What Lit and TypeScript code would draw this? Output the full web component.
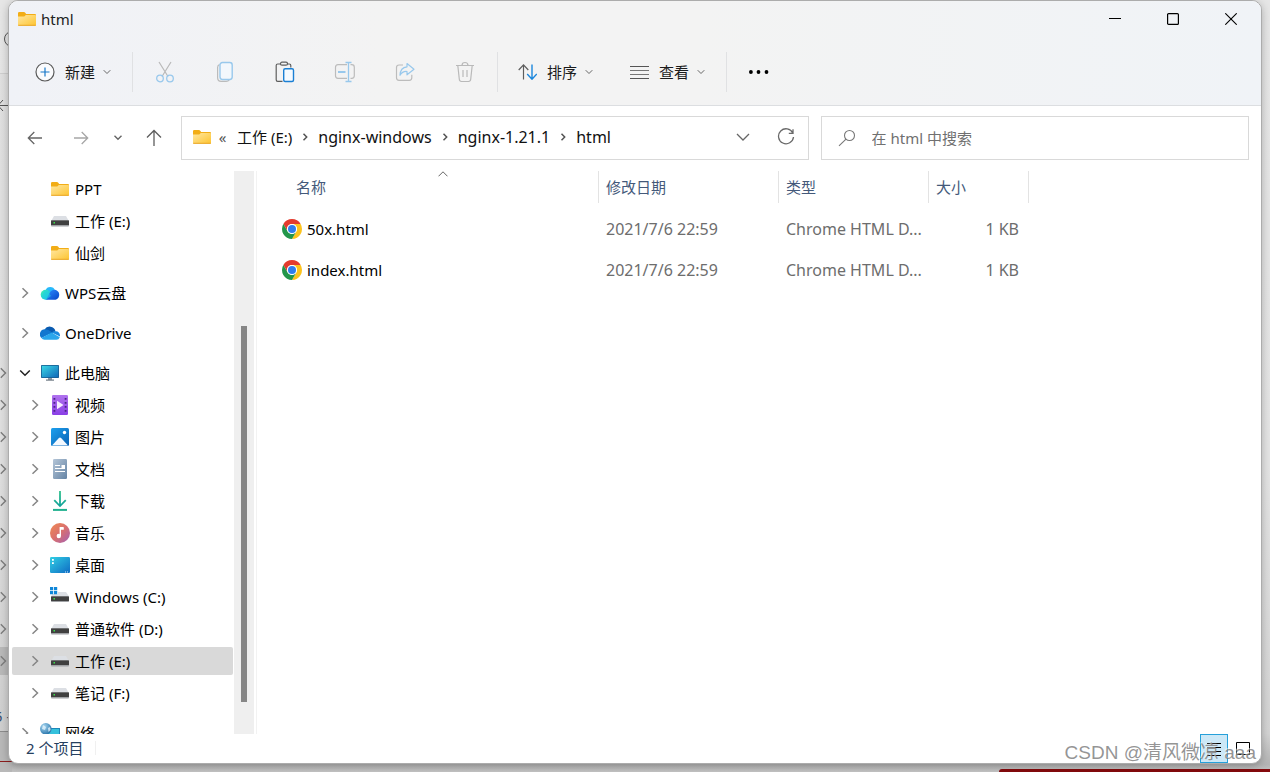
import { LitElement, html, css, nothing } from "lit";
import { customElement, state } from "lit/decorators.js";
import { classMap } from "lit/directives/class-map.js";

const folder = html`<svg class="ic" width="20" height="20" viewBox="0 0 20 20" aria-hidden="true">
  <defs><linearGradient id="fg" x1="0" y1="0" x2="1" y2="1"><stop offset="0" stop-color="#ffe7a2"/><stop offset="1" stop-color="#fdc42f"/></linearGradient></defs>
  <path d="M1 4.2Q1 3 2.2 3H7q.6 0 1 .5L9.200 5H18q1 0 1 1v3H1z" fill="#f2ad16"/>
  <path d="M1 7.500H6.600q.7 0 1.200-.5L8.800 6H18.200q.8 0 .8.800V16q0 .8-.8.800H1.800Q1 16.800 1 16z" fill="url(#fg)"/>
  <path d="M1.200 16.300H18.800" stroke="#e9a72a"/>
</svg>`;

const drive = html`<svg class="ic" width="20" height="20" viewBox="0 0 20 20" aria-hidden="true">
  <path d="M4 5h12l2.800 5H1.200z" fill="#dcdfe4"/><rect x="1" y="9" width="18" height="6.500" rx=".8" fill="#a0a2a5"/>
  <rect x="1" y="9.500" width="18" height="4.500" rx=".5" fill="#404040"/><rect x="3.500" y="11" width="1.500" height="1.500" fill="#3be04a"/></svg>`;
const driveC = html`<svg class="ic" width="20" height="20" viewBox="0 0 20 20" aria-hidden="true">
  <path d="M4 5h12l2.800 4H1.200z" fill="#dcdfe4"/><rect x="1" y="9" width="18" height="6" rx=".8" fill="#a0a2a5"/>
  <rect x="1" y="9.500" width="18" height="4.500" rx=".5" fill="#404040"/><rect x="3.500" y="11" width="1.500" height="1.500" fill="#3be04a"/>
  <path d="M0 0h8v7H0z" fill="#fff"/><path d="M0 0h3.200v3.200H0zM4 0h3.200v3.200H4zM0 4h3.200v3.200H0zM4 4h3.200v3.200H4z" fill="#1086d8"/></svg>`;
const wps = html`<svg class="ic" width="20" height="20" viewBox="0 0 20 20" aria-hidden="true">
  <defs><linearGradient id="w1" x1="0" y1="0" x2="1" y2="1"><stop offset="0" stop-color="#3ff0b0"/><stop offset="1" stop-color="#12b5f4"/></linearGradient>
  <linearGradient id="w2" x1="0" y1="0" x2="1" y2="1"><stop offset="0" stop-color="#2f8dff"/><stop offset="1" stop-color="#0644c8"/></linearGradient></defs>
  <path d="M5.500 7.500a5 5 0 0 1 9.500 0L10 13z" fill="#28b9fb"/>
  <circle cx="5.700" cy="11.800" r="5" fill="url(#w1)"/>
  <path d="M6 16.800h8.300a5 5 0 1 0-4-8.100z" fill="url(#w2)"/>
  <path d="M5 7q3 1 6 6l-5 3.800q-3-1-4.500-3z" fill="#21cfe2" opacity=".55"/></svg>`;
const oneDrive = html`<svg class="ic" width="20" height="20" viewBox="0 0 20 20" aria-hidden="true">
  <path d="M4.500 6.500a6 6 0 0 1 11 1.700l-5 4z" fill="#0a5bb0"/>
  <path d="M5 6.300a5 5 0 0 0-3.500 8.700L12 9.800Q9 6.300 5 6.300z" fill="#1277cf"/>
  <path d="M11.800 9.600 20 13.500Q20.300 8.500 15.700 8.200q-2.400-.2-3.900 1.400z" fill="#1a8ae0"/>
  <path d="M1.400 15 11.700 9.500l8.100 4.800q-1 2.500-3.400 2.500H4.500q-2 0-3.100-1.800z" fill="#2aa6ec"/></svg>`;
const pc = html`<svg class="ic" width="20" height="20" viewBox="0 0 20 20" aria-hidden="true">
  <defs><linearGradient id="pg" x1="0" y1="0" x2="1" y2="1"><stop offset="0" stop-color="#3ad7e6"/><stop offset="1" stop-color="#1168b8"/></linearGradient></defs>
  <path d="M8 14h4v3H8z" fill="#8e9aa5"/><path d="M6 16.500h8v1.200H6z" fill="#6f7a84"/>
  <rect x="1" y="2" width="18" height="13" rx=".8" fill="#185d91"/><rect x="1.800" y="2.800" width="16.400" height="11.400" fill="url(#pg)"/></svg>`;
const video = html`<svg class="ic" width="20" height="20" viewBox="0 0 20 20" aria-hidden="true">
  <defs><linearGradient id="vg" x1="0" y1="0" x2="0" y2="1"><stop offset="0" stop-color="#b072ee"/><stop offset="1" stop-color="#8a3fe6"/></linearGradient></defs>
  <rect x="2" y="0" width="16" height="20" rx="1.200" fill="url(#vg)"/>
  <path d="M3.500 3h1.800v1.800H3.500zM3.500 7h1.800v1.800H3.500zM3.500 11h1.800v1.800H3.500zM3.500 15h1.800v1.800H3.500zM14.700 3h1.800v1.800h-1.800zM14.700 7h1.800v1.800h-1.800zM14.700 11h1.800v1.800h-1.800zM14.700 15h1.800v1.800h-1.800z" fill="#4b2388"/>
  <path d="M7 5.700v8.600l6.500-4.300z" fill="#f5ecff"/></svg>`;
const picture = html`<svg class="ic" width="20" height="20" viewBox="0 0 20 20" aria-hidden="true">
  <defs><linearGradient id="ig" x1="0" y1="0" x2="1" y2="1"><stop offset="0" stop-color="#1ca0ee"/><stop offset="1" stop-color="#0a61b4"/></linearGradient></defs>
  <rect x="1" y="1" width="18" height="18" rx="1.500" fill="url(#ig)"/><circle cx="14.500" cy="5.500" r="1.700" fill="#fff"/>
  <path d="M2 18.500 8.900 11q1.100-1.100 2.200 0L18 18.500z" fill="#f4f9ff"/></svg>`;
const doc = html`<svg class="ic" width="20" height="20" viewBox="0 0 20 20" aria-hidden="true">
  <defs><linearGradient id="og" x1="0" y1="0" x2="1" y2="1"><stop offset="0" stop-color="#b5c6d8"/><stop offset="1" stop-color="#6483a4"/></linearGradient></defs>
  <rect x="3" y="0" width="14" height="20" rx="1.200" fill="url(#og)"/>
  <path d="M5 6.500h5M5 9.500h10M5 12.500h10" stroke="#fff" stroke-width="1.200"/><path d="M11.500 6H15v3.600h-3.500z" fill="#fff"/></svg>`;
const download = html`<svg class="ic" width="20" height="20" viewBox="0 0 20 20" aria-hidden="true" fill="none">
  <defs><linearGradient id="lg" x1="0" y1="0" x2="0" y2="1"><stop offset="0" stop-color="#32c28c"/><stop offset="1" stop-color="#0e9f9a"/></linearGradient></defs>
  <path d="M9.100 0h1.800v13l4.200-4.500 1.300 1.300L10 16.200 3.600 9.800l1.300-1.300 4.200 4.500z" fill="url(#lg)"/><path d="M3 18.900h14" stroke="#1fb08e" stroke-width="2"/></svg>`;
const music = html`<svg class="ic" width="20" height="20" viewBox="0 0 20 20" aria-hidden="true">
  <defs><linearGradient id="mg" x1="0" y1="0" x2="1" y2="1"><stop offset="0" stop-color="#f08a52"/><stop offset=".5" stop-color="#d9706f"/><stop offset="1" stop-color="#a35fb4"/></linearGradient></defs>
  <circle cx="10" cy="10" r="10" fill="url(#mg)"/><circle cx="8.800" cy="13" r="2.200" fill="#fff"/>
  <path d="M9.600 4h3.600q.6 0 .6.600v1.600q0 .6-.6.600h-2.200V13H9.600z" fill="#fff"/></svg>`;
const desktop = html`<svg class="ic" width="20" height="20" viewBox="0 0 20 20" aria-hidden="true">
  <defs><linearGradient id="kg" x1="0" y1="0" x2="1" y2="1"><stop offset="0" stop-color="#31cfe4"/><stop offset="1" stop-color="#0f6cc4"/></linearGradient></defs>
  <rect x="0" y="2" width="20" height="16" rx="1.200" fill="url(#kg)"/>
  <path d="M2 4h1.800v1.800H2zM2 7.200h1.800V9H2z" fill="#fff"/><path d="M15 17h1M17 17h1" stroke="#cfe8fb"/></svg>`;
const network = html`<svg class="ic" width="20" height="20" viewBox="0 0 20 20" aria-hidden="true">
  <defs><radialGradient id="ng" cx=".35" cy=".3" r=".7"><stop offset="0" stop-color="#a8d8f2"/><stop offset="1" stop-color="#2d78ad"/></radialGradient></defs>
  <rect x="5" y="5" width="15" height="12" fill="#1d86b8"/><rect x="6" y="6" width="13" height="10" fill="#35c1dc"/>
  <circle cx="5.800" cy="5.800" r="5.800" fill="url(#ng)"/><path d="M3 2l3 2-1 3-3-1zM8 5l2-1 .5 3-2 2z" fill="#e2f3fb" opacity=".8"/></svg>`;
const chrome = html`<svg class="ic" width="20" height="20" viewBox="0 0 20 20" aria-hidden="true">
  <circle cx="10" cy="10" r="10" fill="#fff"/>
  <path d="M1.340 5 5.670 12.500A5 5 0 0 1 10 5H18.660A10 10 0 0 0 1.340 5z" fill="#e33b2e"/>
  <path d="M18.660 5A10 10 0 0 1 10 20L14.330 12.500A5 5 0 0 0 10 5z" fill="#fcc31e"/>
  <path d="M10 20A10 10 0 0 1 1.340 5L5.670 12.500A5 5 0 0 0 14.330 12.500z" fill="#23964a"/>
  <circle cx="10" cy="10" r="5" fill="#fff"/><circle cx="10" cy="10" r="4" fill="#2f7ded"/></svg>`;

const chevDown = html`<svg class="ic" width="8" height="8" viewBox="0 0 8 8" fill="none" stroke="#666" aria-hidden="true"><path d="M.7 2.200 4 5.500 7.300 2.200"/></svg>`;
const crumbArrow = html`<svg class="crumb-arrow" width="26" height="10" viewBox="0 0 26 10" fill="none" stroke="#555" stroke-width="1.500" aria-hidden="true"><path d="M11.500 1.800 14.700 5 11.500 8.200"/></svg>`;

interface Place {
  name: string;
  icon: unknown;
  level: number;
  twisty?: "open" | "closed";
  group?: boolean;
}

const places: Place[] = [
  { name: "PPT", icon: folder, level: 1 },
  { name: "工作 (E:)", icon: drive, level: 1 },
  { name: "仙剑", icon: folder, level: 1 },
  { name: "WPS云盘", icon: wps, level: 0, twisty: "closed", group: true },
  { name: "OneDrive", icon: oneDrive, level: 0, twisty: "closed", group: true },
  { name: "此电脑", icon: pc, level: 0, twisty: "open", group: true },
  { name: "视频", icon: video, level: 1, twisty: "closed" },
  { name: "图片", icon: picture, level: 1, twisty: "closed" },
  { name: "文档", icon: doc, level: 1, twisty: "closed" },
  { name: "下载", icon: download, level: 1, twisty: "closed" },
  { name: "音乐", icon: music, level: 1, twisty: "closed" },
  { name: "桌面", icon: desktop, level: 1, twisty: "closed" },
  { name: "Windows (C:)", icon: driveC, level: 1, twisty: "closed" },
  { name: "普通软件 (D:)", icon: drive, level: 1, twisty: "closed" },
  { name: "工作 (E:)", icon: drive, level: 1, twisty: "closed" },
  { name: "笔记 (F:)", icon: drive, level: 1, twisty: "closed" },
  { name: "网络", icon: network, level: 0, twisty: "closed", group: true },
];

const files = [
  { name: "50x.html", date: "2021/7/6 22:59", type: "Chrome HTML D...", size: "1 KB" },
  { name: "index.html", date: "2021/7/6 22:59", type: "Chrome HTML D...", size: "1 KB" },
];

const reset = css`
  * { box-sizing: border-box; }
  button { font: inherit; color: inherit; background: none; border: 0; padding: 0; margin: 0; display: flex; align-items: center; justify-content: center; }
  a { color: inherit; text-decoration: none; }
  .ic { display: block; flex: none; }
`;

@customElement("explorer-toolbar")
export class ExplorerToolbar extends LitElement {
  static styles = [reset, css`
    :host { display: block; background: linear-gradient(90deg, #f0f2f7, #f3f3f3 30%, #f3f3f3 55%, #f0f3f7); border-bottom: 1px solid #dcdee1; }
    .title { display: flex; height: 36px; align-items: center; padding: 0 1px 0 8px; }
    .name { flex: 1; padding-left: 4px; color: #222; }
    .win { width: 58px; height: 36px; }
    .bar { display: flex; height: 68px; align-items: center; padding: 2px 0 0 9px; }
    .menu { width: 112px; height: 40px; gap: 8px; justify-content: flex-start; padding-left: 17px; color: #1b1b1b; }
    .text { padding-left: 2px; }
    .tool { width: 60px; height: 40px; }
    .sep { width: 1px; height: 40px; margin: 0 2px; background: #e0e1e3; }
  `];

  render() {
    return html`
      <div class="title">
        ${folder}<span class="name">html</span>
        <button class="win" aria-label="最小化"><svg width="12" height="12" viewBox="0 0 12 12"><path d="M0 5.500h12" stroke="#000"/></svg></button>
        <button class="win" aria-label="最大化"><svg width="12" height="12" viewBox="0 0 12 12"><rect x=".6" y=".6" width="10.800" height="10.800" rx="1" fill="none" stroke="#000" stroke-width="1.200"/></svg></button>
        <button class="win" aria-label="关闭"><svg width="12" height="12" viewBox="0 0 12 12"><path d="M.3.300l11.400 11.400M11.700.300.300 11.700" stroke="#000" stroke-width="1.100"/></svg></button>
      </div>
      <div class="bar">
        <button class="menu"><svg class="ic" width="20" height="20" viewBox="0 0 20 20" fill="none"><circle cx="10" cy="10" r="9" fill="#fafbfd" stroke="#5a5a5a" stroke-width="1.200"/><path d="M10 5.500v9M5.500 10h9" stroke="#1677c8" stroke-width="1.200"/></svg><span class="text">新建</span>${chevDown}</button>
        <span class="sep"></span>
        <button class="tool" aria-label="剪切"><svg width="20" height="22" viewBox="0 0 20 22" fill="none"><path d="M4 1l9 14.500M16 1 7 15.500" stroke="#b9b9b9" stroke-width="1.200"/><circle cx="5" cy="17.500" r="3.300" stroke="#98c8ec" stroke-width="1.300"/><circle cx="15" cy="17.500" r="3.300" stroke="#98c8ec" stroke-width="1.300"/></svg></button>
        <button class="tool" aria-label="复制"><svg width="20" height="22" viewBox="0 0 20 22" fill="none"><path d="M4.500 3.500Q2.600 4.200 2.600 6.500v10.300q0 3.600 3.600 3.600h5q2 0 3-1.500" stroke="#bbb" stroke-width="1.200"/><rect x="5" y="1.500" width="12.200" height="17" rx="2.400" stroke="#98c8ec" stroke-width="1.400" fill="#f2f7fc"/></svg></button>
        <button class="tool" aria-label="粘贴"><svg width="20" height="22" viewBox="0 0 20 22" fill="none"><path d="M6 3H2.700Q1.200 3 1.200 4.500v14.300q0 1.600 1.500 1.600h4.800M12.500 3h1.800q1.500 0 1.500 1.500v2" stroke="#5d5d5d" stroke-width="1.200"/><rect x="5.500" y="1.200" width="7" height="3" rx="1.500" stroke="#5d5d5d" stroke-width="1.200"/><rect x="8.700" y="7.700" width="9.800" height="12.800" rx="1.500" fill="#f5faff" stroke="#1a7fd4" stroke-width="1.400"/></svg></button>
        <button class="tool" aria-label="重命名"><svg width="22" height="22" viewBox="0 0 22 22" fill="none"><path d="M13 3.700H4Q1.500 3.700 1.500 6.200v8.600q0 2.500 2.500 2.500h9M16.500 3.700h1.300q2.500 0 2.500 2.500v8.600q0 2.500-2.500 2.500h-1.300" stroke="#bcbcbc" stroke-width="1.200"/><path d="M4 11h7.500" stroke="#98c8ec" stroke-width="2"/><path d="M11.500 1.500h6M11.500 20.500h6M14.500 1.500v19" stroke="#98c8ec" stroke-width="1.300"/></svg></button>
        <button class="tool" aria-label="共享"><svg width="20" height="22" viewBox="0 0 20 22" fill="none"><path d="M8 4H4Q1.500 4 1.500 6.500v10.300q0 2.500 2.500 2.500h10.300q2.500 0 2.500-2.500v-3" stroke="#bcbcbc" stroke-width="1.200"/><path d="M12 2.500 19 8.200 12 13.800v-3.300q-4.500-.5-7 3.800.3-8 7-8.500z" stroke="#98c8ec" stroke-width="1.200" stroke-linejoin="round"/></svg></button>
        <button class="tool" aria-label="删除"><svg width="20" height="22" viewBox="0 0 20 22" fill="none" stroke="#b9b9b9" stroke-width="1.200"><path d="M1 4.500h18M7 4.500q0-3 3-3t3 3M2.800 4.500l1.500 13.800q.2 2.200 2.200 2.200h7q2 0 2.200-2.200l1.500-13.800M8 9v7M12 9v7"/></svg></button>
        <span class="sep"></span>
        <button class="menu"><svg class="ic" width="20" height="20" viewBox="0 0 20 20" fill="none"><path d="M6.500 17.500V2.500M1.700 8 6.500 2.800 11.300 8" stroke="#5d5d5d" stroke-width="1.200"/><path d="M15 2.500v15M10.200 12l4.800 5.200 4.800-5.200" stroke="#1a86dc" stroke-width="1.400"/></svg><span class="text">排序</span>${chevDown}</button>
        <button class="menu"><svg class="ic" width="20" height="20" viewBox="0 0 20 20" fill="none"><path d="M1 4.500h19M1 16.500h19" stroke="#555"/><path d="M1 8.500h19M1 12.500h19" stroke="#777"/></svg><span class="text">查看</span>${chevDown}</button>
        <span class="sep"></span>
        <button class="tool" aria-label="更多"><svg width="20" height="6" viewBox="0 0 20 6"><circle cx="1.900" cy="3" r="1.900"/><circle cx="9.500" cy="3" r="1.900"/><circle cx="17.500" cy="3" r="1.900"/></svg></button>
      </div>`;
  }
}

@customElement("explorer-address")
export class ExplorerAddress extends LitElement {
  static styles = [reset, css`
    :host { display: flex; align-items: center; padding: 10px 12px 11px 3px; }
    .steps { display: grid; grid-template-columns: 46px 46px 28px 44px; margin-right: 5px; }
    .step { height: 40px; }
    .path { flex: 3 1 0; min-width: 0; display: flex; align-items: center; height: 44px; border: 1px solid #d9d9d9; padding: 0 0 2px 10px; white-space: nowrap; color: #111; }
    .dots { width: 25px; padding-right: 4px; text-align: center; color: #555; }
    .latin { font-size: 16px; }
    .crumb-arrow { flex: none; }
    .push { margin-left: auto; }
    .end { width: 43px; height: 40px; }
    .search { flex: 2 1 0; min-width: 0; height: 44px; margin-left: 12px; display: flex; align-items: center; gap: 16px; padding-left: 16px; border: 1px solid #d9d9d9; }
    .field { flex: 1; min-width: 0; border: 0; outline: 0; padding: 0; background: none; font: inherit; color: #333; }
    .field::placeholder { color: #707070; opacity: 1; }
  `];

  render() {
    return html`
      <div class="steps">
        <button class="step" aria-label="后退"><svg width="16" height="16" viewBox="0 0 16 16" fill="none" stroke="#666" stroke-width="1.300"><path d="M15 8H1.500M7.300 2 1.300 8l6 6"/></svg></button>
        <button class="step" aria-label="前进"><svg width="16" height="16" viewBox="0 0 16 16" fill="none" stroke="#a6a6a6" stroke-width="1.300"><path d="M1 8h13.500M8.700 2l6 6-6 6"/></svg></button>
        <button class="step" aria-label="最近浏览的位置"><svg width="8" height="8" viewBox="0 0 8 8" fill="none" stroke="#666" stroke-width="1.400"><path d="M.5 1.800 4 5.300 7.500 1.800"/></svg></button>
        <button class="step" aria-label="上移"><svg width="16" height="18" viewBox="0 0 16 18" fill="none" stroke="#5d5d5d" stroke-width="1.300"><path d="M8 17V1.700M1 8.500l7-7 7 7"/></svg></button>
      </div>
      <nav class="path" aria-label="地址">
        ${folder}<span class="dots">«</span>
        <a href="#e">工作 (E:)</a>${crumbArrow}
        <a class="latin" href="#nginx-windows">nginx-windows</a>${crumbArrow}
        <a class="latin" href="#nginx">nginx-1.21.1</a>${crumbArrow}
        <a class="latin" href="#html">html</a>
        <button class="end push" aria-label="以前的位置"><svg width="14" height="8" viewBox="0 0 14 8" fill="none" stroke="#666" stroke-width="1.300"><path d="M1 1l6 6 6-6"/></svg></button>
        <button class="end" aria-label="刷新"><svg width="18" height="18" viewBox="0 0 18 18" fill="none" stroke="#6a6a6a" stroke-width="1.300"><path d="M15.800 5A7.500 7.500 0 1 0 16.500 9M16 1.200V5.300H11.800"/></svg></button>
      </nav>
      <label class="search">
        <svg class="ic" width="18" height="18" viewBox="0 0 18 18" fill="none" stroke="#777" stroke-width="1.100"><circle cx="11.500" cy="6.500" r="5"/><path d="M8 10.200 1 16.800"/></svg>
        <input class="field" type="search" aria-label="搜索" placeholder="在 html 中搜索" />
      </label>`;
  }
}

@customElement("explorer-tree")
export class ExplorerTree extends LitElement {
  @state() private current = 14;

  static styles = [reset, css`
    :host { display: grid; grid-template-columns: 1fr 20px; min-height: 0; overflow: hidden; }
    .list { margin: 0; padding: 2px 1px 0 3px; list-style: none; min-height: 0; overflow: hidden; }
    .item { padding: 2px 0; }
    .group { margin-top: 8px; }
    .row { display: flex; align-items: center; gap: 5px; height: 28px; padding-left: 3px; border-radius: 2px; color: #000; white-space: nowrap; }
    .deep { padding-left: 13px; }
    .on { background: #d9d9d9; }
    .twisty { width: 20px; display: flex; justify-content: center; flex: none; }
    .track { display: grid; grid-template-rows: 155fr 376fr 32fr; justify-items: center; background: #efefef; }
    .thumb { grid-row: 2; width: 6px; background: #868686; }
  `];

  render() {
    return html`
      <ul class="list">
        ${places.map((p, i) => html`
          <li class=${classMap({ item: true, group: !!p.group })}>
            <a href="#place" class=${classMap({ row: true, deep: p.level === 1, on: i === this.current })}
              @click=${(e: Event) => { e.preventDefault(); this.current = i; }}>
              <span class="twisty">${p.twisty === "closed"
                ? html`<svg width="8" height="12" viewBox="0 0 8 12" fill="none" stroke="#858585" stroke-width="1.500"><path d="M1.500 1.200 6.500 6 1.500 10.800"/></svg>`
                : p.twisty === "open"
                ? html`<svg width="12" height="8" viewBox="0 0 12 8" fill="none" stroke="#222" stroke-width="1.500"><path d="M1.200 1.500 6 6.300 10.800 1.500"/></svg>`
                : nothing}</span>
              ${p.icon}<span>${p.name}</span>
            </a>
          </li>`)}
      </ul>
      <div class="track"><div class="thumb"></div></div>`;
  }
}

@customElement("explorer-files")
export class ExplorerFiles extends LitElement {
  static styles = [reset, css`
    :host { display: block; min-width: 0; min-height: 0; overflow: hidden; margin-left: 2px; border-left: 1px solid #f2f2f2; }
    .table { width: 772px; max-width: 100%; table-layout: fixed; border-collapse: separate; border-spacing: 0; }
    .c1 { width: 342px; } .c2 { width: 180px; } .c3 { width: 150px; } .c4 { width: 100px; }
    .head { height: 32px; padding: 0 0 0 7px; border-right: 1px solid #e3e3e3; text-align: left; font-weight: 400; color: #44597a; }
    .first { padding-left: 39px; }
    .label { display: grid; grid-template-columns: 142px 1fr; height: 32px; align-items: center; }
    .sort { display: block; align-self: start; }
    .gap { height: 5px; padding: 0; }
    .cell { height: 41px; padding: 0 0 0 7px; color: #6d6d6d; font-size: 16px; white-space: nowrap; overflow: hidden; }
    .main { padding-left: 25px; font-size: 15px; }
    .file { display: flex; align-items: center; gap: 5px; color: #000; }
    .num { text-align: right; padding-right: 10px; }
  `];

  render() {
    return html`
      <table class="table">
        <colgroup><col class="c1" /><col class="c2" /><col class="c3" /><col class="c4" /></colgroup>
        <thead>
          <tr>
            <th class="head first"><span class="label">名称
              <svg class="sort" width="10" height="6" viewBox="0 0 10 6" fill="none" stroke="#666"><path d="M.5 5.300 5 .8 9.500 5.300"/></svg></span></th>
            <th class="head">修改日期</th><th class="head">类型</th><th class="head">大小</th>
          </tr>
        </thead>
        <tbody>
          <tr><td class="gap" colspan="4"></td></tr>
          ${files.map((f) => html`<tr>
            <td class="cell main"><a class="file" href="#file">${chrome}<span>${f.name}</span></a></td>
            <td class="cell">${f.date}</td><td class="cell">${f.type}</td><td class="cell num">${f.size}</td>
          </tr>`)}
        </tbody>
      </table>`;
  }
}

@customElement("app-root")
export class AppRoot extends LitElement {
  static styles = [reset, css`
    :host { display: block; position: relative; height: 100vh; padding: 0 8px 8px; overflow: hidden; box-sizing: border-box;
      background: linear-gradient(180deg, #e6e6e6, #e4e4e4 60%, #d4d4d4 95%, #b4b4b4 99%, #c4c4c4);
      font-family: "Noto Sans", "Noto Sans CJK SC", sans-serif; font-size: 15px; line-height: 20px; }
    .behind { position: absolute; left: 0; top: 0; }
    .other { position: absolute; left: -6px; top: 706px; color: #3b5270; }
    .taskbar { position: absolute; right: 0; bottom: 0; width: 271px; height: 3px; background: #850a0d; border-top-left-radius: 3px; }
    .window { position: relative; height: 100%; display: grid; grid-template-rows: auto auto 1fr 29px; border: 1px solid #acacac; border-radius: 10px; background: #fff; overflow: hidden; box-shadow: 0 2px 8px rgba(0, 0, 0, 0.25); }
    .body { display: grid; grid-template-columns: 245px 1fr; min-height: 0; }
    .status { display: flex; align-items: stretch; padding: 0 4px 0 17px; color: #26405f; }
    .count { flex: 1; display: flex; align-items: center; padding-bottom: 2px; }
    .tick { width: 1px; height: 14px; margin-left: 12px; background: #f0f0f0; }
    .view { width: 28px; }
    .second { margin-left: 1px; }
    .active { background: #cce8f7; border: 1px solid #26a0da; }
    .mark { position: absolute; right: 14px; bottom: 7px; font-family: "Liberation Sans", "Noto Sans CJK SC", sans-serif; font-size: 19px; line-height: 24px; color: rgba(130, 130, 130, 0.85); text-shadow: -1px -1px 0 rgba(255, 255, 255, 0.5); pointer-events: none; white-space: nowrap; }
  `];

  render() {
    const rows = [373, 405, 437, 469, 501, 533, 565, 597, 629, 661];
    return html`
      <svg class="behind" width="12" height="772" viewBox="0 0 12 772" fill="none" aria-hidden="true">
        <path d="M0 73.500h12" stroke="#cfcfcf"/><path d="M0 74h12v657H0z" fill="#000" opacity=".02"/>
        <circle cx="12" cy="39" r="7.500" stroke="#555"/><path d="M3 100-2 105.500 3 111M0 105.500h9" stroke="#555"/>
        <path d="M0 647h12v28H0z" fill="#b9b9b9"/>
        ${rows.map((y) => html`<svg y=${y - 6} width="12" height="12" viewBox="0 0 12 12"><path d="M.8 1.200 5.500 6 .8 10.800" stroke="#7e7e7e" stroke-width="1.400" fill="none"/></svg>`)}
        <path d="M0 731.500h12" stroke="#8d8d8d"/><path d="M0 732h12v40H0z" fill="#b9b9b9"/><path d="M0 761.500h12" stroke="#8c1d1d"/>
      </svg>
      <span class="other" aria-hidden="true">5 -</span>
      <div class="taskbar"></div>
      <main class="window">
        <explorer-toolbar></explorer-toolbar>
        <explorer-address></explorer-address>
        <div class="body">
          <explorer-tree></explorer-tree>
          <explorer-files></explorer-files>
        </div>
        <footer class="status">
          <span class="count">2 个项目<span class="tick"></span></span>
          <button class="view active" aria-label="详细信息"><svg width="16" height="16" viewBox="0 0 16 16" stroke="#000"><path d="M1 2.500h14M1 6.500h14M1 10.500h14M1 14.500h14"/></svg></button>
          <button class="view second" aria-label="大图标"><svg width="16" height="16" viewBox="0 0 16 16" fill="none" stroke="#000"><path d="M1.500 1.500h13v12h-13z"/></svg></button>
        </footer>
      </main>
      <div class="mark">CSDN @清风微凉 aaa</div>`;
  }
}
